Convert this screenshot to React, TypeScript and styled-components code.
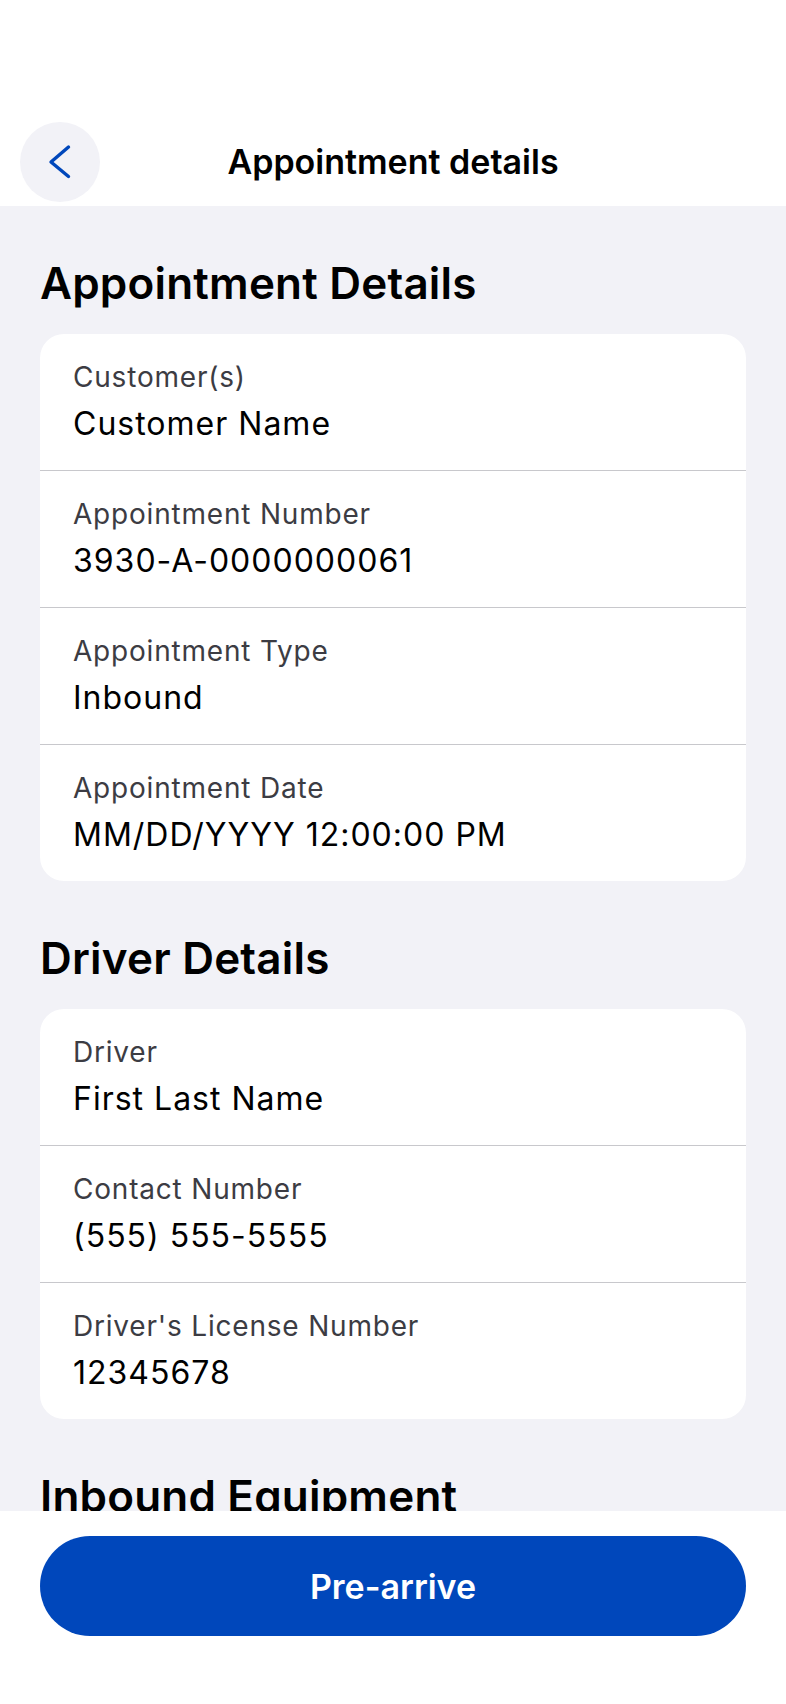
import React from 'react'
import styled, { createGlobalStyle } from 'styled-components'

const GlobalStyle = createGlobalStyle`
  html, body {
    margin: 0;
    padding: 0;
    background: #ffffff;
  }
  body {
    font-family: Inter, "Noto Sans", "Liberation Sans", sans-serif;
    color: #000;
  }
`

interface Field {
  label: string
  value: string
}

const appointmentFields: Field[] = [
  { label: 'Customer(s)', value: 'Customer Name' },
  { label: 'Appointment Number', value: '3930-A-0000000061' },
  { label: 'Appointment Type', value: 'Inbound' },
  { label: 'Appointment Date', value: 'MM/DD/YYYY 12:00:00 PM' },
]

const driverFields: Field[] = [
  { label: 'Driver', value: 'First Last Name' },
  { label: 'Contact Number', value: '(555) 555-5555' },
  { label: "Driver's License Number", value: '12345678' },
]

const App: React.FC = () => {
  return (
    <Screen>
      <GlobalStyle />
      <Header>
        <BackButton aria-label="Back">
          <svg width="80" height="80" viewBox="0 0 80 80" fill="none">
            <path d="M48.5 25 L31 40 L48.5 54.5" stroke="#0047BB" strokeWidth="3.4" strokeLinecap="round" strokeLinejoin="round" />
          </svg>
        </BackButton>
        <HeaderTitle>Appointment details</HeaderTitle>
        <HeaderSpacer />
      </Header>
      <Content>
        <Section title="Appointment Details" fields={appointmentFields} />
        <Section title="Driver Details" fields={driverFields} />
        <SectionTitle>Inbound Equipment</SectionTitle>
      </Content>
      <Footer>
        <PrimaryButton>Pre-arrive</PrimaryButton>
      </Footer>
    </Screen>
  )
}

const Section: React.FC<{ title: string; fields: Field[] }> = ({ title, fields }) => (
  <SectionBlock>
    <SectionTitle>{title}</SectionTitle>
    <Card>
      {fields.map((f, i) => (
        <Row key={i} first={i === 0}>
          <Label>{f.label}</Label>
          <Value>{f.value}</Value>
        </Row>
      ))}
    </Card>
  </SectionBlock>
)

const Screen = styled.div`
  height: 1704px;
  display: flex;
  flex-direction: column;
  overflow: hidden;
`

const Header = styled.div`
  height: 206px;
  flex-shrink: 0;
  background: #fff;
  box-sizing: border-box;
  padding: 122px 20px 4px;
  display: flex;
  align-items: flex-start;
`

const BackButton = styled.button`
  width: 80px;
  height: 80px;
  border-radius: 50%;
  border: none;
  background: #f2f2f7;
  display: flex;
  align-items: center;
  justify-content: center;
  padding: 0;
  flex-shrink: 0;
`

const HeaderTitle = styled.div`
  flex: 1;
  text-align: center;
  font-size: 34px;
  font-weight: 600;
  line-height: 80px;
`

const HeaderSpacer = styled.div`
  width: 80px;
  flex-shrink: 0;
`

const Content = styled.div`
  flex: 1;
  background: #f2f2f7;
  padding: 0 40px;
  overflow: hidden;
`

const SectionBlock = styled.div`
  display: flex;
  flex-direction: column;
`

const SectionTitle = styled.h2`
  margin: 53px 0 27px;
  font-size: 44px;
  line-height: 48px;
  font-weight: 600;
  letter-spacing: 0.2px;
`

const Card = styled.div`
  background: #fff;
  border-radius: 24px;
  overflow: hidden;
`

const Row = styled.div<{ first: boolean }>`
  height: ${p => (p.first ? 136 : 137)}px;
  box-sizing: border-box;
  padding: 26px 33px 0;
  border-top: ${p => (p.first ? 'none' : '1px solid #c8c8cc')};
  display: flex;
  flex-direction: column;
  gap: 11px;
`

const Label = styled.div`
  font-size: 28px;
  line-height: 34px;
  letter-spacing: 0.8px;
  color: #3c3c43;
`

const Value = styled.div`
  font-size: 32px;
  line-height: 38px;
  letter-spacing: 1px;
  color: #000;
`

const Footer = styled.div`
  height: 193px;
  flex-shrink: 0;
  background: #fff;
  box-sizing: border-box;
  padding: 25px 40px 0;
`

const PrimaryButton = styled.button`
  width: 100%;
  height: 100px;
  border: none;
  border-radius: 50px;
  background: #0047bb;
  color: #fff;
  font-family: Inter, "Noto Sans", "Liberation Sans", sans-serif;
  font-size: 34px;
  font-weight: 600;
`

export default App
